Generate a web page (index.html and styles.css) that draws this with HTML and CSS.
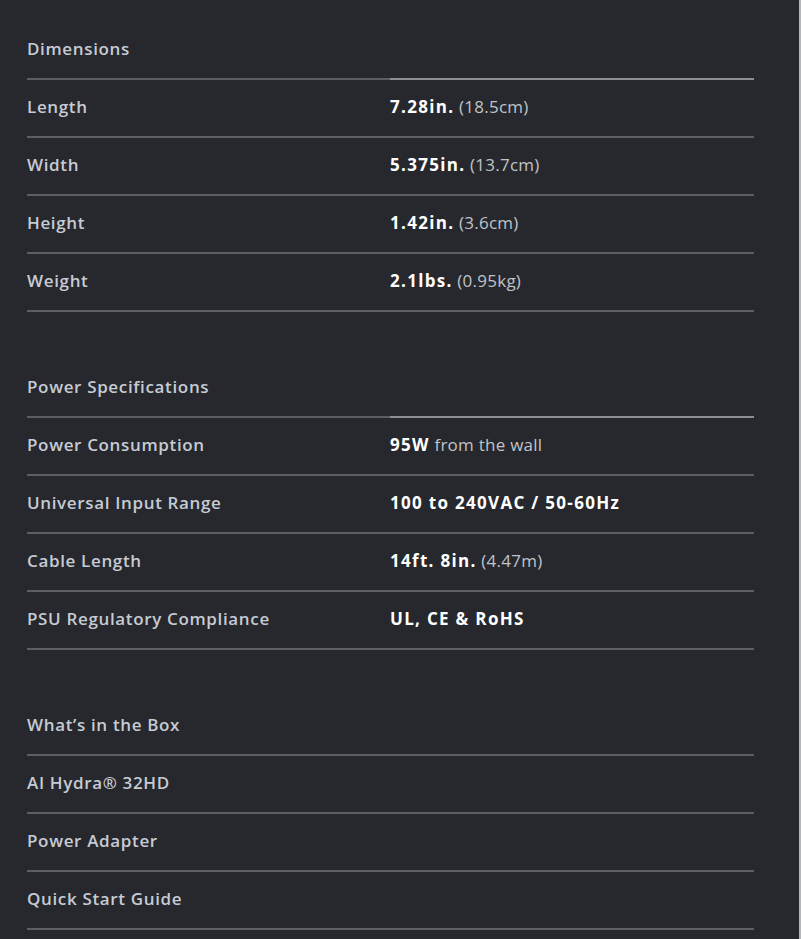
FILE: index.html
```html
<!DOCTYPE html>
<html lang="en">
<head>
<meta charset="utf-8">
<title>Specifications</title>
<link rel="stylesheet" href="styles.css">
</head>
<body>
<div class="page">
  <main class="specs">
    <section class="group">
      <h3 class="group-title split">Dimensions</h3>
      <div class="row"><span class="label">Length</span><span class="value"><b>7.28in.</b> (18.5cm)</span></div>
      <div class="row"><span class="label">Width</span><span class="value"><b>5.375in.</b> (13.7cm)</span></div>
      <div class="row"><span class="label">Height</span><span class="value"><b>1.42in.</b> (3.6cm)</span></div>
      <div class="row"><span class="label">Weight</span><span class="value"><b>2.1lbs.</b> (0.95kg)</span></div>
    </section>
    <section class="group">
      <h3 class="group-title split">Power Specifications</h3>
      <div class="row"><span class="label">Power Consumption</span><span class="value"><b>95W</b> from the wall</span></div>
      <div class="row"><span class="label">Universal Input Range</span><span class="value"><b>100 to 240VAC / 50-60Hz</b></span></div>
      <div class="row"><span class="label">Cable Length</span><span class="value"><b>14ft. 8in.</b> (4.47m)</span></div>
      <div class="row"><span class="label">PSU Regulatory Compliance</span><span class="value"><b>UL, CE &amp; RoHS</b></span></div>
    </section>
    <section class="group">
      <h3 class="group-title">What’s in the Box</h3>
      <div class="row"><span class="label">AI Hydra® 32HD</span></div>
      <div class="row"><span class="label">Power Adapter</span></div>
      <div class="row"><span class="label">Quick Start Guide</span></div>
    </section>
  </main>
</div>
</body>
</html>
```
FILE: styles.css
```css
html, body {
  margin: 0;
  padding: 0;
  background: #26282d;
}
body {
  font-family: "Open Sans", "Liberation Sans", sans-serif;
  -webkit-font-smoothing: antialiased;
}
.page {
  width: 801px;
  min-height: 939px;
  border-right: 2px solid #b4b6b9;
  box-sizing: border-box;
}
.specs {
  padding: 22px 0 0 27px;
  width: 727px;
  display: flex;
  flex-direction: column;
  gap: 48px;
}
.group {
  display: flex;
  flex-direction: column;
}
.group-title {
  margin: 0;
  height: 52px;
  padding-bottom: 4px;
  display: flex;
  align-items: center;
  font-size: 17px;
  font-weight: 600;
  letter-spacing: 0.65px;
  color: #c6cbd4;
  border-bottom: 2px solid #5c5f64;
}
.group-title.split {
  border-image: linear-gradient(to right, #5a5d62 0, #5a5d62 363px, #8c8e92 363px, #8c8e92 100%) 1;
}
.row {
  display: grid;
  grid-template-columns: 363px 1fr;
  align-items: center;
  height: 52px;
  padding-bottom: 4px;
  border-bottom: 2px solid #5c5f64;
}
.label {
  font-size: 17px;
  font-weight: 600;
  letter-spacing: 0.65px;
  color: #c6cbd4;
}
.value {
  font-size: 17px;
  font-weight: 400;
  letter-spacing: 0.25px;
  color: #c0c3c8;
}
.value b {
  font-weight: 700;
  letter-spacing: 1.3px;
  color: #ffffff;
}
```
